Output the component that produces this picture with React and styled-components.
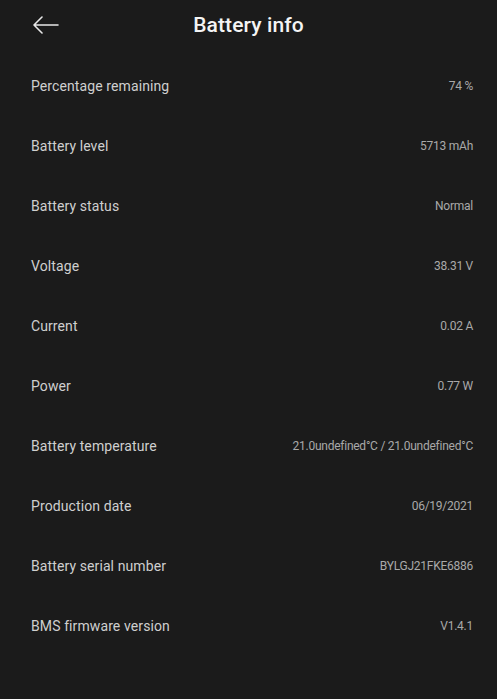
import React from "react";
import styled, { createGlobalStyle } from "styled-components";

const GlobalStyle = createGlobalStyle`
  html, body {
    margin: 0;
    padding: 0;
    background: #1b1b1b;
  }
  body {
    font-family: Roboto, "Noto Sans", sans-serif;
  }
`;

const Page = styled.div`
  min-height: 699px;
  background: #1b1b1b;
  color: #fff;
`;

const Header = styled.div`
  position: relative;
  height: 50px;
  display: flex;
  align-items: center;
  justify-content: center;
`;

const BackButton = styled.button`
  position: absolute;
  left: 32px;
  top: 13px;
  width: 30px;
  height: 24px;
  padding: 0;
  border: none;
  background: none;
  display: flex;
  align-items: center;
  cursor: pointer;
`;

const Title = styled.h1`
  margin: 0;
  font-size: 21px;
  font-weight: 500;
  color: #f4f4f4;
  letter-spacing: 0.1px;
`;

const List = styled.div`
  padding-top: 6px;
  display: flex;
  flex-direction: column;
`;

const Row = styled.div`
  height: 60px;
  padding: 0 24px 0 31px;
  display: flex;
  align-items: center;
  justify-content: space-between;
`;

const Label = styled.span`
  font-size: 14px;
  color: #cfcfcf;
  letter-spacing: 0.1px;
`;

const Value = styled.span`
  font-size: 12px;
  color: #a9a9a9;
  letter-spacing: -0.25px;
`;

const rows = [
  ["Percentage remaining", "74 %"],
  ["Battery level", "5713 mAh"],
  ["Battery status", "Normal"],
  ["Voltage", "38.31 V"],
  ["Current", "0.02 A"],
  ["Power", "0.77 W"],
  ["Battery temperature", "21.0undefined°C / 21.0undefined°C"],
  ["Production date", "06/19/2021"],
  ["Battery serial number", "BYLGJ21FKE6886"],
  ["BMS firmware version", "V1.4.1"],
];

export default function App() {
  return (
    <Page>
      <GlobalStyle />
      <Header>
        <BackButton aria-label="Back">
          <svg width="27" height="18" viewBox="0 0 27 18" fill="none">
            <path
              d="M26 9H2M10 1L2 9l8 8"
              stroke="#e8e8e8"
              strokeWidth="1.6"
              strokeLinecap="round"
              strokeLinejoin="round"
            />
          </svg>
        </BackButton>
        <Title>Battery info</Title>
      </Header>
      <List>
        {rows.map(([label, value]) => (
          <Row key={label}>
            <Label>{label}</Label>
            <Value>{value}</Value>
          </Row>
        ))}
      </List>
    </Page>
  );
}
